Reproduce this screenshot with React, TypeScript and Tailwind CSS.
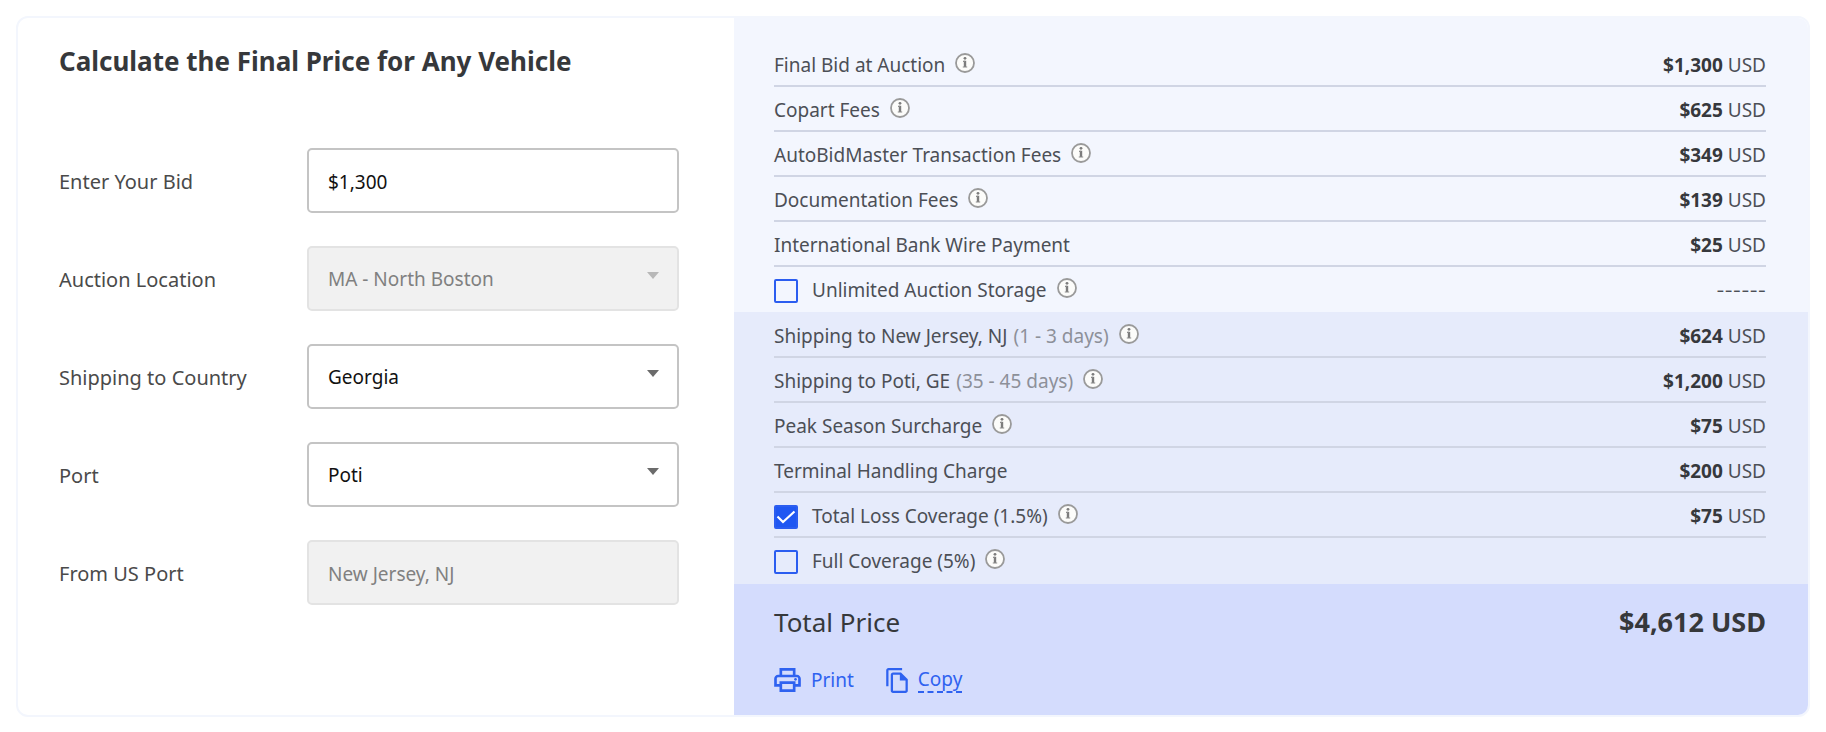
import { useState } from "react";
import type { ReactNode } from "react";

interface Fee {
  id: string;
  label: string;
  note?: string;
  amount?: string;
  info?: boolean;
  optional?: boolean;
  placeholder?: string;
}

const AUCTION_FEES: Fee[] = [
  { id: "bid", label: "Final Bid at Auction", amount: "$1,300", info: true },
  { id: "copart", label: "Copart Fees", amount: "$625", info: true },
  { id: "transaction", label: "AutoBidMaster Transaction Fees", amount: "$349", info: true },
  { id: "docs", label: "Documentation Fees", amount: "$139", info: true },
  { id: "wire", label: "International Bank Wire Payment", amount: "$25" },
  { id: "storage", label: "Unlimited Auction Storage", info: true, optional: true, placeholder: "------" },
];

const SHIPPING_FEES: Fee[] = [
  { id: "inland", label: "Shipping to New Jersey, NJ", note: "(1 - 3 days)", amount: "$624", info: true },
  { id: "ocean", label: "Shipping to Poti, GE", note: "(35 - 45 days)", amount: "$1,200", info: true },
  { id: "peak", label: "Peak Season Surcharge", amount: "$75", info: true },
  { id: "terminal", label: "Terminal Handling Charge", amount: "$200" },
  { id: "loss", label: "Total Loss Coverage (1.5%)", amount: "$75", info: true, optional: true },
  { id: "full", label: "Full Coverage (5%)", info: true, optional: true },
];

const fieldClass =
  "w-full h-[65px] px-[19px] pt-[2px] text-[19px] rounded-[5px] border-2 border-[#c4c4c4] bg-white text-[#111111] appearance-none opacity-100 focus:outline-none focus:border-[#2459f0] disabled:bg-[#f1f1f1] disabled:border-[#e3e3e3] disabled:text-[#808080]";

function InfoIcon() {
  return (
    <svg width="20" height="20" viewBox="0 0 20 20" fill="none">
      <circle cx="10" cy="10" r="9" fill="#fcfcfa" stroke="#9a9a9a" strokeWidth="1.8" />
      <path d="M10 7.800v6.200" stroke="#7c7c7c" strokeWidth="2.4" />
      <path d="M8 8.300h2M7.800 14h4.400" stroke="#8c8c8c" strokeWidth="1.200" />
      <circle cx="10" cy="5.300" r="1.400" fill="#7c7c7c" />
    </svg>
  );
}

function Field({ id, label, children }: { id: string; label: string; children: ReactNode }) {
  return (
    <div className="flex items-center">
      <label htmlFor={id} className="w-2/5 shrink-0 pt-[2px] text-[20px] text-[#4a4a4a]">{label}</label>
      <div className="relative flex-1">{children}</div>
    </div>
  );
}

function Caret({ muted }: { muted?: boolean }) {
  return (
    <svg width="12" height="7" viewBox="0 0 12 7" className="absolute right-5 top-[26px] pointer-events-none">
      <path d="M0 0h12L6 7z" fill={muted ? "#b8b8b8" : "#6b6b6b"} />
    </svg>
  );
}

function FeeTable({ fees, checked, onToggle }: { fees: Fee[]; checked: string[]; onToggle: (id: string) => void }) {
  return (
    <table className="w-full border-separate border-spacing-0">
      <tbody>
        {fees.map(fee => (
          <tr key={fee.id} className="group">
            <td className="h-[45px] p-0 pt-1 border-b-2 border-[#d0d5e4] group-last:border-transparent">
              <div className="flex items-center">
                {fee.optional && (
                  <span className="relative mr-[14px] size-6 shrink-0">
                    <input
                      id={fee.id}
                      type="checkbox"
                      checked={checked.includes(fee.id)}
                      onChange={() => onToggle(fee.id)}
                      className="block size-6 appearance-none rounded-[2px] border-2 border-[#2b5df0] checked:bg-[#1f57f2]"
                    />
                    {checked.includes(fee.id) && (
                      <svg viewBox="0 0 24 24" className="absolute inset-0 size-6 pointer-events-none" fill="none">
                        <path d="M3.500 11.500l5.500 5.500L20.500 6.500" stroke="#ffffff" strokeWidth="2.200" />
                      </svg>
                    )}
                  </span>
                )}
                {fee.optional ? <label htmlFor={fee.id}>{fee.label}</label> : <span>{fee.label}</span>}
                {fee.note && <span className="ml-[6px] text-[#8d9099]">{fee.note}</span>}
                {fee.info && (
                  <button type="button" aria-label={`About ${fee.label}`} className="ml-[10px] mb-[6px]">
                    <InfoIcon />
                  </button>
                )}
              </div>
            </td>
            <td className="h-[45px] p-0 pt-1 text-right border-b-2 border-[#d0d5e4] group-last:border-transparent">
              {fee.amount && <><strong className="font-bold text-[#36383c]">{fee.amount}</strong> USD</>}
              {fee.placeholder && <span className="font-['Inter',sans-serif] text-[18px]">{fee.placeholder}</span>}
            </td>
          </tr>
        ))}
      </tbody>
    </table>
  );
}

export default function App() {
  const [bid, setBid] = useState("$1,300");
  const [country, setCountry] = useState("Georgia");
  const [port, setPort] = useState("Poti");
  const [checked, setChecked] = useState<string[]>(["loss"]);

  const toggle = (id: string) =>
    setChecked(checked.includes(id) ? checked.filter(c => c !== id) : [...checked, id]);

  return (
    <main className="p-4 font-['Noto_Sans',sans-serif]">
      <div className="flex overflow-hidden rounded-xl border-2 border-[#f3f6fd] bg-white">
        {/* Form */}
        <form className="w-2/5 pl-[41px] pr-[55px] pt-[25px]" onSubmit={e => e.preventDefault()}>
          <h1 className="text-[26px] leading-9 font-bold text-[#36383b]">Calculate the Final Price for Any Vehicle</h1>
          <div className="mt-[69px] space-y-[33px]">
            <Field id="bidAmount" label="Enter Your Bid">
              <input id="bidAmount" type="text" value={bid} onChange={e => setBid(e.target.value)} className={fieldClass} />
            </Field>
            <Field id="location" label="Auction Location">
              <select id="location" disabled className={fieldClass}>
                <option>MA - North Boston</option>
              </select>
              <Caret muted />
            </Field>
            <Field id="country" label="Shipping to Country">
              <select id="country" value={country} onChange={e => setCountry(e.target.value)} className={fieldClass}>
                <option>Georgia</option>
              </select>
              <Caret />
            </Field>
            <Field id="port" label="Port">
              <select id="port" value={port} onChange={e => setPort(e.target.value)} className={fieldClass}>
                <option>Poti</option>
              </select>
              <Caret />
            </Field>
            <Field id="usPort" label="From US Port">
              <input id="usPort" type="text" disabled value="New Jersey, NJ" className={fieldClass} />
            </Field>
          </div>
        </form>

        {/* Price breakdown */}
        <div className="flex-1 text-[19px] text-[#4c4f56]">
          <section className="pl-10 pr-[42px] pt-6 bg-[#f3f6fe]">
            <FeeTable fees={AUCTION_FEES} checked={checked} onToggle={toggle} />
          </section>
          <section className="pl-10 pr-[42px] py-px bg-[#e6ebfb]">
            <FeeTable fees={SHIPPING_FEES} checked={checked} onToggle={toggle} />
          </section>
          <section className="pl-10 pr-[42px] py-5 bg-[#d4dcfd]">
            <div className="flex items-center justify-between leading-9 text-[#36383b]">
              <span className="text-[26px]">Total Price</span>
              <strong className="text-[27px] font-bold">$4,612 USD</strong>
            </div>
            <div className="mt-[26px] flex items-center gap-8 text-[#2f62f0]">
              <button type="button" className="flex items-center gap-[10px]">
                <svg width="27" height="24" viewBox="2 3 20 18" fill="currentColor">
                  <path d="M19 8h-1V3H6v5H5c-1.660 0-3 1.340-3 3v6h4v4h12v-4h4v-6c0-1.660-1.340-3-3-3zM8 5h8v3H8V5zm8 12v2H8v-4h8v2zm2-2v-2H6v2H4v-4c0-.55.450-1 1-1h14c.55 0 1 .45 1 1v4h-2z" />
                  <circle cx="18" cy="11.500" r="1" />
                </svg>
                Print
              </button>
              <button type="button" className="flex items-center gap-[10px]">
                <svg width="22" height="25" viewBox="2 1 19 22" fill="currentColor">
                  <path d="M16 1H4c-1.100 0-2 .9-2 2v14h2V3h12V1zm-1 4H8c-1.100 0-1.990.9-1.990 2L6 21c0 1.100.890 2 1.990 2H19c1.100 0 2-.9 2-2V11l-6-6zM8 21V7h6v5h5v9H8z" />
                </svg>
                <span className="border-b-2 border-dashed border-[#2f62f0] leading-6">Copy</span>
              </button>
            </div>
          </section>
        </div>
      </div>
    </main>
  );
}
